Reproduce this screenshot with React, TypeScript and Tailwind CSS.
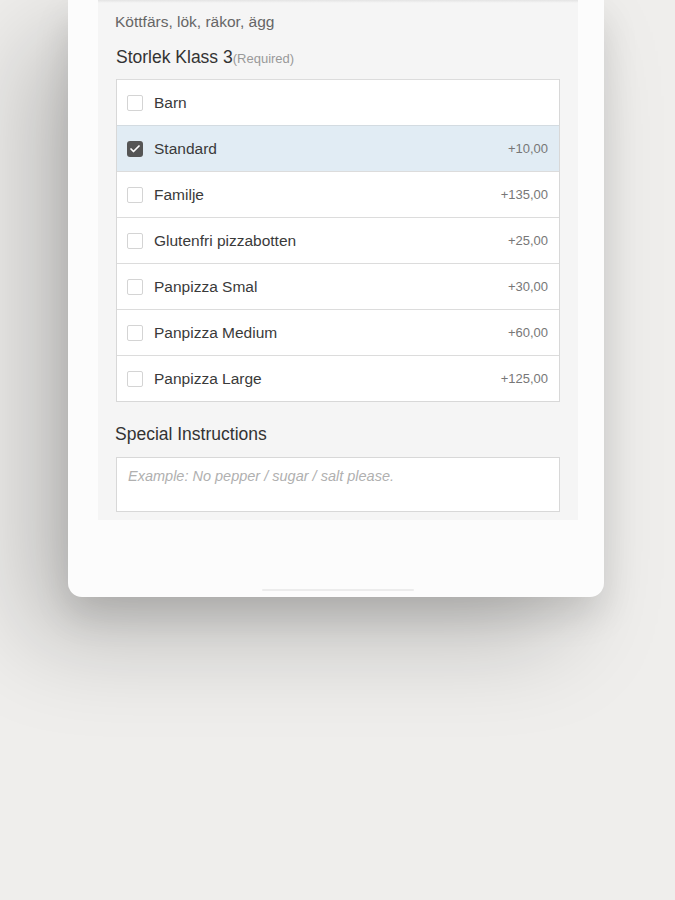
import { Check } from 'lucide-react'

const OPTIONS = [
  { name: 'Barn', price: '' },
  { name: 'Standard', price: '+10,00', checked: true },
  { name: 'Familje', price: '+135,00' },
  { name: 'Glutenfri pizzabotten', price: '+25,00' },
  { name: 'Panpizza Smal', price: '+30,00' },
  { name: 'Panpizza Medium', price: '+60,00' },
  { name: 'Panpizza Large', price: '+125,00' },
]

function OptionRow({ name, price, checked }: { name: string; price: string; checked?: boolean }) {
  return (
    <div
      className={
        checked
          ? 'flex h-[46px] items-center border-t border-[#d3dbe1] bg-[#e1ecf4] pl-[10px] pr-[11px]'
          : 'flex h-[46px] items-center border-t border-[#dcdcdc] bg-white pl-[10px] pr-[11px]'
      }
    >
      {checked ? (
        <span className="flex h-[16px] w-[16px] items-center justify-center rounded-[3px] bg-[#555]">
          <Check size={12} strokeWidth={3.5} color="#fff" />
        </span>
      ) : (
        <span className="h-[16px] w-[16px] rounded-[2px] border border-[#d4d4d4] bg-white" />
      )}
      <span className="ml-[11px] flex-1 text-[15.5px] text-[#3a3a3a]">{name}</span>
      <span className="text-[13px] text-[#777]">{price}</span>
    </div>
  )
}

export default function App() {
  return (
    <div
      className="relative h-[900px] w-[675px] overflow-hidden bg-[#efeeec]"
      style={{ fontFamily: '"Liberation Sans", Arial, sans-serif' }}
    >
      {/* Device */}
      <div className="ml-[68px] flex h-[597px] w-[536px] flex-col rounded-b-[14px] bg-[#fcfcfc] shadow-[-40px_40px_100px_rgba(0,0,0,0.22),0_18px_36px_rgba(0,0,0,0.12)]">
        <div className="ml-[30px] w-[480px] bg-[#f5f5f5] px-[18px] pb-[8px]">
          <div className="-mx-[18px] h-[3px] bg-gradient-to-b from-[#e4e4e4] to-[#f5f5f5]" />
          <p className="-ml-[1px] mt-[9px] text-[15.5px] leading-[20px] text-[#666]">Köttfärs, lök, räkor, ägg</p>
          <p className="mt-[14px] text-[17.5px] leading-[22px] text-[#333]">
            Storlek Klass 3<span className="text-[13px] text-[#999]">(Required)</span>
          </p>

          {/* Options */}
          <div className="mt-[9px] border-x border-b border-[#d8d8d8]">
            {OPTIONS.map((o) => (
              <OptionRow key={o.name} name={o.name} price={o.price} checked={o.checked} />
            ))}
          </div>

          <p className="-ml-[1px] mt-[21px] text-[17.5px] leading-[22px] text-[#333]">Special Instructions</p>
          <div className="mt-[12px] h-[55px] border border-[#d8d8d8] bg-white pl-[11px] pt-[6px]">
            <span className="text-[14.5px] italic leading-[18px] text-[#b0b0b0]">
              Example: No pepper / sugar / salt please.
            </span>
          </div>
        </div>

        <div className="mt-auto mb-[6px] ml-[194px] h-[2px] w-[152px] rounded-full bg-[#ececec]" />
      </div>
    </div>
  )
}
